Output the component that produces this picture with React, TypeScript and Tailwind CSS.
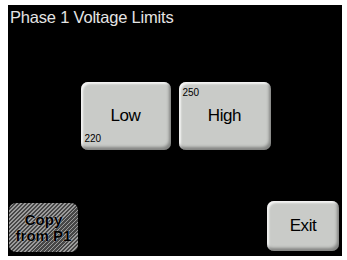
import React from "react";

const btn =
  "relative flex items-center justify-center rounded-[7px] bg-[#c9cbc8] text-black shadow-[inset_-2px_-3px_3px_rgba(0,0,0,0.35),inset_2px_2px_2px_rgba(255,255,255,0.8)]";

export default function App() {
  return (
    <div className="w-[347px] h-[260px] bg-white pt-[5px] pl-[8px] font-['Liberation_Sans',Arial,sans-serif]">
      <div className="w-[334px] h-[251px] bg-black flex flex-col">
        <div className="pl-[2px] pt-[2px] text-[16.5px] leading-[20px] tracking-[-0.2px] text-[#e4e4e4]">
          Phase 1 Voltage Limits
        </div>

        <div className="mt-[55px] flex justify-center gap-[8px] pl-[1px]">
          <button className={`${btn} w-[90px] h-[68px]`}>
            <span className="text-[17px] tracking-[-0.4px]">Low</span>
            <span className="absolute left-[4px] bottom-[6px] text-[10px] leading-none">220</span>
          </button>
          <button className={`${btn} w-[92px] h-[68px]`}>
            <span className="text-[17px] tracking-[-0.4px]">High</span>
            <span className="absolute left-[4px] top-[6px] text-[10px] leading-none">250</span>
          </button>
        </div>

        <div className="mt-auto mb-[4px] flex items-end justify-between pl-[1px] pr-[3px]">
          <div className="w-[69px] h-[49px] rounded-[7px] bg-[repeating-linear-gradient(135deg,#9c9c9c_0px,#9c9c9c_1.2px,#464646_1.2px,#464646_2.8px)] flex items-center justify-center text-center text-[15px] font-bold leading-[16px] text-black [text-shadow:0_0_1px_#bbb,0_0_1px_#bbb]">
            Copy
            <br />
            from P1
          </div>
          <button className={`${btn} w-[72px] h-[50px] mb-[1px]`}>
            <span className="text-[17px] tracking-[-0.4px]">Exit</span>
          </button>
        </div>
      </div>
    </div>
  );
}
